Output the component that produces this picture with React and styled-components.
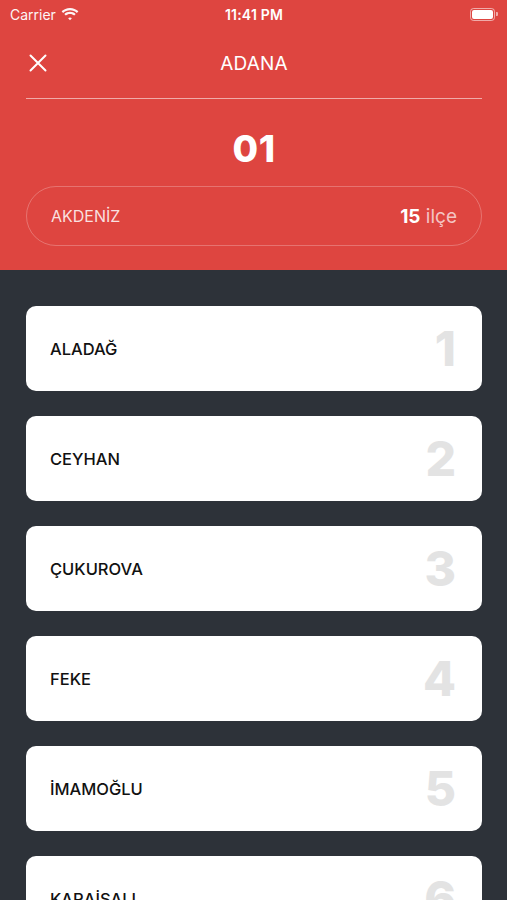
import React from "react";
import styled, { createGlobalStyle } from "styled-components";

// only the cards that fit on the screen
const districts = ["ALADAĞ", "CEYHAN", "ÇUKUROVA", "FEKE", "İMAMOĞLU", "KARAİSALI"];

const GlobalStyle = createGlobalStyle`
  html, body {
    margin: 0;
    padding: 0;
    height: 900px;
    overflow: hidden;
    background: #2d3239;
    font-family: Inter, "Noto Sans", sans-serif;
    -webkit-font-smoothing: antialiased;
  }
`;

const Screen = styled.div`
  width: 507px;
  height: 900px;
  overflow: hidden;
  background: #2d3239;
`;

const Header = styled.header`
  background: #de4540;
  color: #fff;
  padding: 0 25px 24px 26px;
`;

// status bar
const StatusBar = styled.div`
  height: 28px;
  margin: 0 -25px 0 -26px;
  padding: 0 9px 0 10px;
  display: grid;
  grid-template-columns: 1fr auto 1fr;
  align-items: center;
  font-size: 14px;
  color: #fff;
`;

const Carrier = styled.div`
  display: flex;
  align-items: center;
  gap: 5px;
  font-weight: 400;
  opacity: 0.95;
`;

const Time = styled.div`
  font-weight: 600;
  letter-spacing: 0.2px;
`;

const Battery = styled.div`
  justify-self: end;
  display: flex;
  align-items: center;
`;

const BatteryBody = styled.div`
  width: 21px;
  height: 9px;
  border: 1.5px solid rgba(255, 255, 255, 0.55);
  border-radius: 3.5px;
  padding: 1px;
  display: flex;

  &::before {
    content: "";
    flex: 1;
    background: #fff;
    border-radius: 2px;
  }
`;

const BatteryCap = styled.div`
  width: 2px;
  height: 4px;
  margin-left: 1px;
  background: rgba(255, 255, 255, 0.55);
  border-radius: 0 1px 1px 0;
`;

const NavRow = styled.div`
  height: 70px;
  display: grid;
  grid-template-columns: 40px 1fr 40px;
  align-items: center;
`;

const CloseButton = styled.button`
  background: none;
  border: 0;
  padding: 0 0 0 3px;
  display: flex;
  align-items: center;
  color: #fff;
`;

const Title = styled.h1`
  margin: 0;
  text-align: center;
  font-size: 19px;
  font-weight: 400;
  letter-spacing: 0.2px;
`;

const Divider = styled.div`
  height: 1px;
  background: rgba(255, 255, 255, 0.55);
`;

const Code = styled.div`
  margin-top: 31px;
  text-align: center;
  font-size: 37px;
  line-height: 38px;
  font-weight: 800;
  letter-spacing: 0.5px;
`;

const RegionPill = styled.div`
  margin-top: 18px;
  height: 60px;
  box-sizing: border-box;
  border: 1px solid rgba(255, 255, 255, 0.25);
  border-radius: 30px;
  padding: 0 24px;
  display: flex;
  align-items: center;
  justify-content: space-between;
`;

const RegionName = styled.span`
  font-size: 16px;
  color: rgba(255, 255, 255, 0.85);
`;

const Count = styled.span`
  font-size: 19px;
  color: rgba(255, 255, 255, 0.7);

  b {
    font-weight: 700;
    color: #fff;
  }
`;

const List = styled.div`
  padding: 36px 25px 0 26px;
  display: flex;
  flex-direction: column;
  gap: 25px;
`;

const Card = styled.div`
  height: 85px;
  flex-shrink: 0;
  background: #fff;
  border-radius: 10px;
  padding: 0 26px 0 24px;
  display: flex;
  align-items: center;
  justify-content: space-between;
`;

const CardName = styled.span`
  font-size: 16.5px;
  font-weight: 500;
  color: #111;
`;

const CardNumber = styled.span`
  font-size: 48px;
  font-weight: 800;
  color: #e3e3e3;
  line-height: 1;
`;

const WifiIcon = () => (
  <svg width="18" height="13" viewBox="0 0 18 13" fill="#fff">
    <path d="M9 2.2c2.7 0 5.1 1 6.9 2.7l1.5-1.6C15.2 1.3 12.3 0 9 0S2.8 1.3.6 3.3l1.5 1.6C3.9 3.2 6.3 2.2 9 2.2z" />
    <path d="M9 6c1.7 0 3.1.6 4.2 1.6l1.5-1.6C13.2 4.6 11.2 3.8 9 3.8S4.8 4.6 3.3 6l1.5 1.6C5.9 6.6 7.3 6 9 6z" />
    <path d="M9 9.6c.7 0 1.4.3 1.9.7L9 12.3 7.1 10.3c.5-.4 1.2-.7 1.9-.7z" />
  </svg>
);

const CloseIcon = () => (
  <svg width="18" height="18" viewBox="0 0 18 18" stroke="#fff" strokeWidth="2" strokeLinecap="round">
    <path d="M1.5 1.5l15 15M16.5 1.5l-15 15" />
  </svg>
);

const App = () => {
  return (
    <Screen>
      <GlobalStyle />
      <Header>
        <StatusBar>
          <Carrier>
            Carrier <WifiIcon />
          </Carrier>
          <Time>11:41 PM</Time>
          <Battery>
            <BatteryBody />
            <BatteryCap />
          </Battery>
        </StatusBar>

        <NavRow>
          <CloseButton>
            <CloseIcon />
          </CloseButton>
          <Title>ADANA</Title>
          <span />
        </NavRow>
        <Divider />

        <Code>01</Code>

        <RegionPill>
          <RegionName>AKDENİZ</RegionName>
          <Count>
            <b>15</b> ilçe
          </Count>
        </RegionPill>
      </Header>

      <List>
        {districts.map((name, i) => (
          <Card key={name}>
            <CardName>{name}</CardName>
            <CardNumber>{i + 1}</CardNumber>
          </Card>
        ))}
      </List>
    </Screen>
  );
};

export default App;
